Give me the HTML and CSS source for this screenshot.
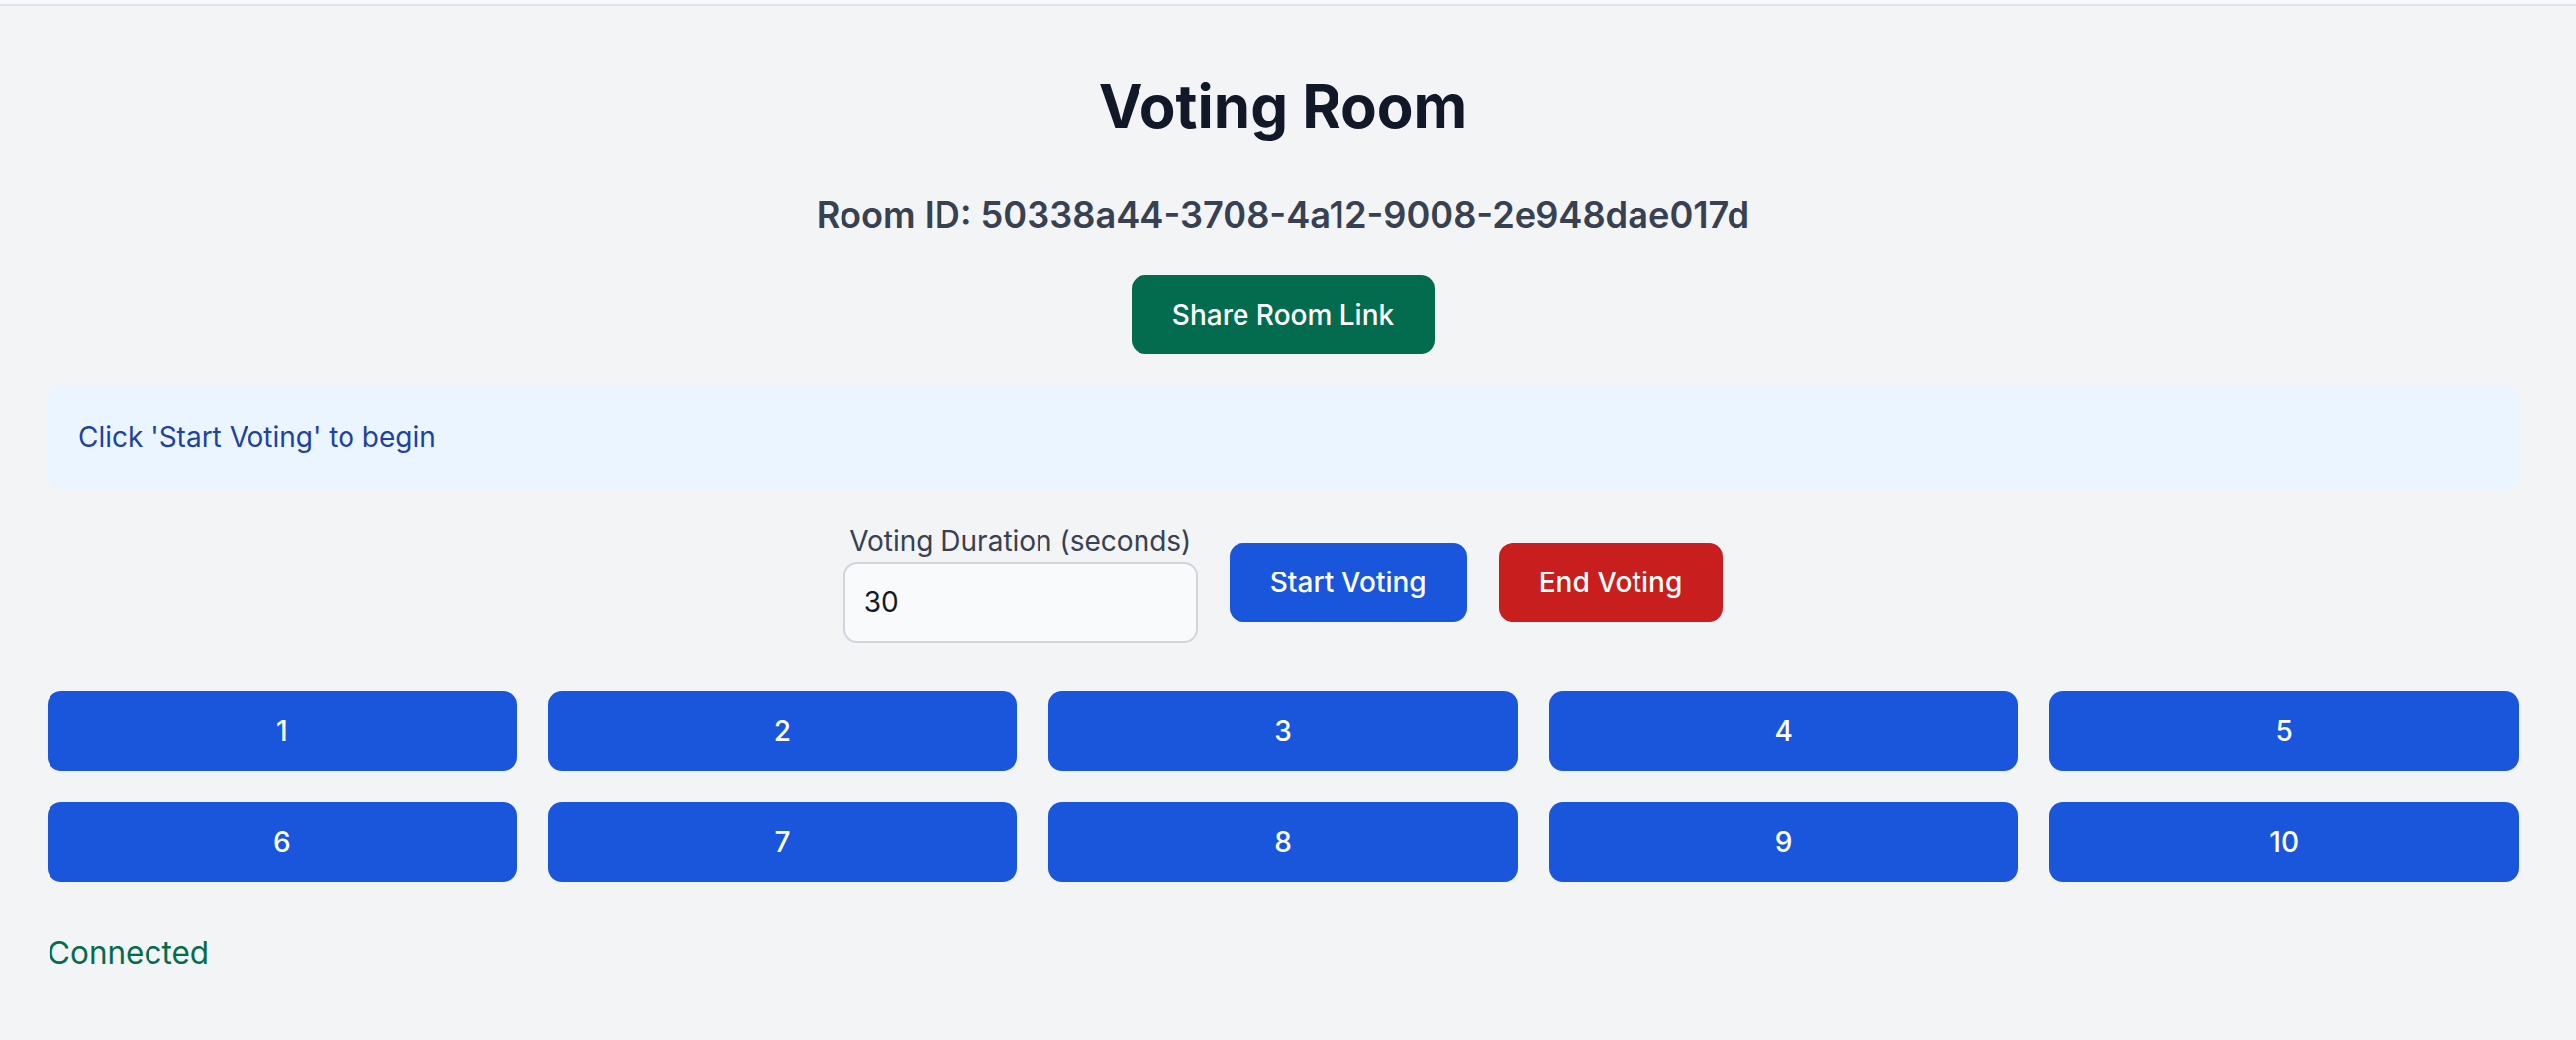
FILE: index.html
```html
<!DOCTYPE html>
<html lang="en">
<head>
<meta charset="utf-8">
<title>Voting Room</title>
<link rel="stylesheet" href="styles.css">
</head>
<body>
<div class="topbar"></div>
<main class="room">
  <h1 class="title">Voting Room</h1>
  <h2 class="room-id">Room ID: 50338a44-3708-4a12-9008-2e948dae017d</h2>
  <div class="share-row">
    <button class="btn btn-green">Share Room Link</button>
  </div>
  <div class="info">Click 'Start Voting' to begin</div>
  <div class="controls">
    <div class="field">
      <label class="field-label" for="duration">Voting Duration (seconds)</label>
      <input class="field-input" id="duration" type="number" value="30">
    </div>
    <button class="btn btn-blue">Start Voting</button>
    <button class="btn btn-red">End Voting</button>
  </div>
  <div class="votes">
    <button class="vote">1</button>
    <button class="vote">2</button>
    <button class="vote">3</button>
    <button class="vote">4</button>
    <button class="vote">5</button>
    <button class="vote">6</button>
    <button class="vote">7</button>
    <button class="vote">8</button>
    <button class="vote">9</button>
    <button class="vote">10</button>
  </div>
  <p class="status">Connected</p>
</main>
</body>
</html>
```
FILE: styles.css
```css
* { box-sizing: border-box; }

html, body {
  margin: 0;
  padding: 0;
  background: #f3f4f6;
  font-family: "Inter", "Noto Sans", "Liberation Sans", sans-serif;
}

.topbar {
  height: 6px;
  background: #f8f8fc;
  border-bottom: 2px solid #e0e0f0;
}

.room {
  padding: 66px 58px 40px 48px;
}

.title {
  margin: 0;
  text-align: center;
  font-size: 60px;
  line-height: 70px;
  font-weight: 700;
  color: #111928;
}

.room-id {
  margin: 51px 0 0;
  text-align: center;
  font-size: 36.2px;
  line-height: 49px;
  font-weight: 600;
  color: #374151;
}

.share-row {
  margin-top: 36px;
  display: flex;
  justify-content: center;
}

.btn {
  border: none;
  font-family: inherit;
  font-size: 28px;
  line-height: 42px;
  font-weight: 500;
  color: #ffffff;
  padding: 19px 41px;
  border-radius: 14px;
  cursor: pointer;
}

.btn-green {
  background: #046c4e;
  padding: 18px 41px;
  height: 79px;
}

.btn-blue { background: #1a56db; }
.btn-red { background: #c81e1e; }

.info {
  margin-top: 32px;
  background: #ebf5ff;
  color: #1e429f;
  border-radius: 14px;
  padding: 31px 31px;
  font-size: 28px;
  line-height: 43px;
}

.controls {
  margin-top: 32px;
  display: flex;
  justify-content: center;
  align-items: center;
  gap: 32px;
}

.field {
  display: flex;
  flex-direction: column;
  align-items: center;
  gap: 1px;
}

.field-label {
  font-size: 28px;
  line-height: 40px;
  color: #374151;
}

.field-input {
  width: 358px;
  height: 82px;
  padding: 0 19px;
  font-family: inherit;
  font-size: 28px;
  line-height: 42px;
  color: #111928;
  background: #f9fafb;
  border: 2px solid #d1d5db;
  border-radius: 14px;
  -moz-appearance: textfield;
}

.field-input::-webkit-outer-spin-button,
.field-input::-webkit-inner-spin-button {
  -webkit-appearance: none;
  margin: 0;
}

.votes {
  margin-top: 49px;
  display: grid;
  grid-template-columns: repeat(5, 1fr);
  gap: 32px;
}

.vote {
  border: none;
  background: #1a56db;
  color: #ffffff;
  font-family: inherit;
  font-size: 28px;
  line-height: 42px;
  font-weight: 500;
  padding: 19px 0;
  border-radius: 14px;
  cursor: pointer;
}

.status {
  margin: 47px 0 0;
  font-size: 31.5px;
  line-height: 49px;
  color: #046c4e;
}
```
